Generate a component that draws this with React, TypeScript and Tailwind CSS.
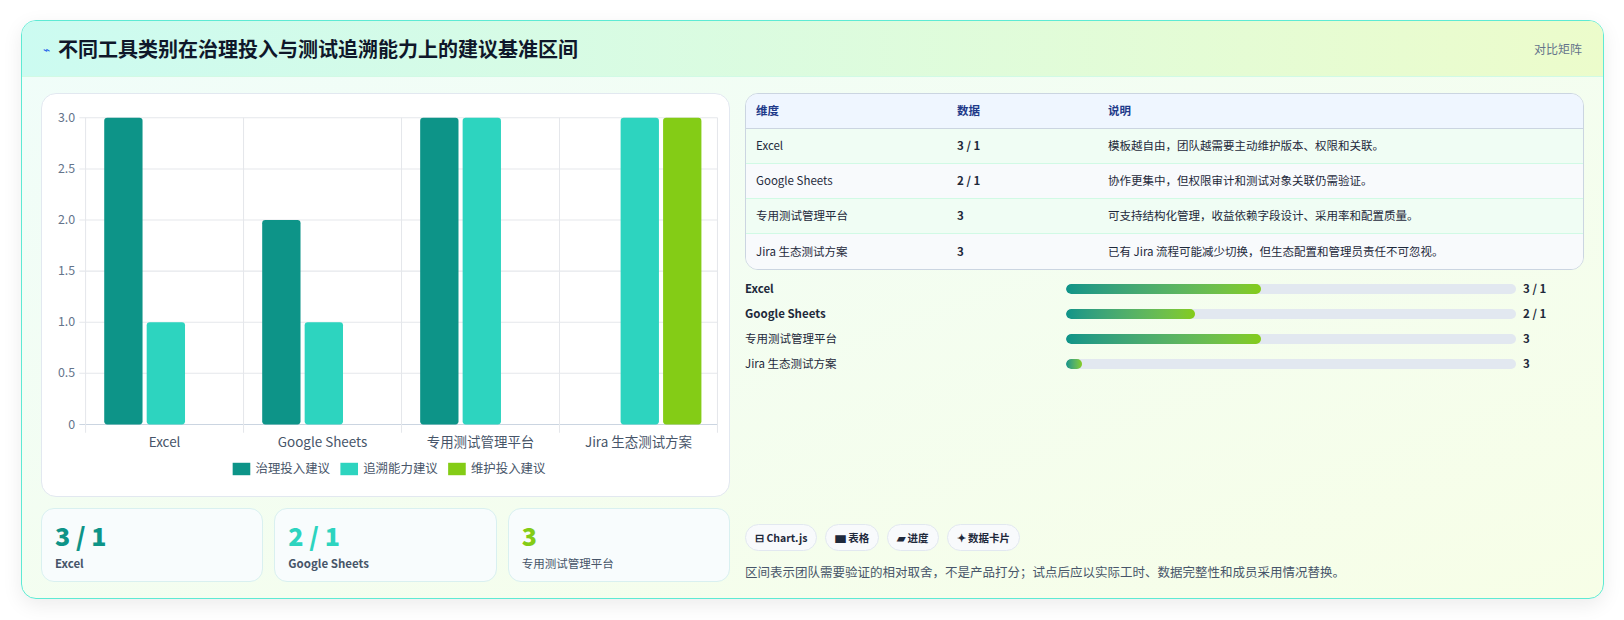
import React from "react";

const cats = ["Excel", "Google Sheets", "专用测试管理平台", "Jira 生态测试方案"];
const data = [
  [3, 1, 0],
  [2, 1, 0],
  [3, 3, 0],
  [0, 3, 3],
];
const colors = ["#0d9488", "#2dd4bf", "#84cc16"];

function Chart() {
  const L = 42, R = 652, T = 23, B = 319;
  const cw = (R - L) / 4;
  const y = (v: number) => B - (v / 3) * (B - T);
  return (
    <svg width="689" height="404" viewBox="0 0 665 390" className="block">
      {[0, 0.5, 1, 1.5, 2, 2.5, 3].map((v) => (
        <g key={v}>
          <line x1={L - 6} x2={R} y1={y(v)} y2={y(v)} stroke={v === 0 ? "#cbd5e1" : "#e5e7eb"} />
          <text x={L - 10} y={y(v) + 4} textAnchor="end" fontSize="12" fill="#64748b">{v === 0 ? "0" : v.toFixed(1)}</text>
        </g>
      ))}
      {[0, 1, 2, 3, 4].map((i) => (
        <line key={i} x1={L + i * cw} x2={L + i * cw} y1={T} y2={B + 8} stroke="#e5e7eb" />
      ))}
      {data.map((row, ci) =>
        row.map((v, si) =>
          v > 0 ? (
            <rect key={ci + "-" + si} x={L + ci * cw + 18 + si * 41} y={y(v)} width={37} height={B - y(v)} rx={3} fill={colors[si]} />
          ) : null
        )
      )}
      {cats.map((c, i) => (
        <text key={c} x={L + i * cw + cw / 2} y={341} textAnchor="middle" fontSize="13" fill="#475569">{c}</text>
      ))}
      {["治理投入建议", "追溯能力建议", "维护投入建议"].map((t, i) => {
        const x = 184 + i * 104;
        return (
          <g key={t}>
            <rect x={x} y={356} width={17} height={12} fill={colors[i]} />
            <text x={x + 22} y={366} fontSize="12" fill="#475569">{t}</text>
          </g>
        );
      })}
    </svg>
  );
}

const rows = [
  ["Excel", "3 / 1", "模板越自由，团队越需要主动维护版本、权限和关联。"],
  ["Google Sheets", "2 / 1", "协作更集中，但权限审计和测试对象关联仍需验证。"],
  ["专用测试管理平台", "3", "可支持结构化管理，收益依赖字段设计、采用率和配置质量。"],
  ["Jira 生态测试方案", "3", "已有 Jira 流程可能减少切换，但生态配置和管理员责任不可忽视。"],
];
const bars = [
  ["Excel", 43.3, "3 / 1", true],
  ["Google Sheets", 28.6, "2 / 1", true],
  ["专用测试管理平台", 43.3, "3", false],
  ["Jira 生态测试方案", 3.5, "3", false],
] as const;

export default function App() {
  return (
    <div className="w-[1624px] h-[620px] bg-white pt-[20px] pl-[21px]" style={{ fontFamily: '"Noto Sans CJK SC", "Noto Sans", sans-serif' }}>
      <div className="w-[1583px] h-[579px] rounded-[15px] border border-[#5eead4] overflow-hidden bg-gradient-to-br from-[#f0fdfa] to-[#f7fee7] shadow-[0_6px_20px_rgba(0,0,0,0.08)] flex flex-col">
        <div className="h-[56px] shrink-0 flex items-center justify-between px-[21px] bg-gradient-to-r from-[#ccfbf1] to-[#ecfccb] border-b border-[#d1fae5]">
          <div className="flex items-center gap-2">
            <span className="text-[12px] text-[#2563eb]">⌁</span>
            <span className="text-[20px] font-bold text-[#0f172a]">不同工具类别在治理投入与测试追溯能力上的建议基准区间</span>
          </div>
          <span className="text-[12px] text-[#64748b]">对比矩阵</span>
        </div>
        <div className="flex gap-[15px] px-[19px] pt-[16px] pb-[17px] flex-1">
          <div className="w-[689px] flex flex-col gap-[11px]">
            <div className="h-[404px] bg-white rounded-[15px] border border-[#e2e8f0] overflow-hidden">
              <Chart />
            </div>
            <div className="grid grid-cols-3 gap-[11px]">
              {[["3 / 1", "Excel", "#0d9488", true], ["2 / 1", "Google Sheets", "#2dd4bf", true], ["3", "专用测试管理平台", "#84cc16", false]].map(([v, l, c, b]) => (
                <div key={l as string} className="h-[74px] rounded-[13px] border border-[#d9f0f0] bg-[#f8fcfd] px-[13px] pt-[11px]">
                  <div className="text-[25px] font-extrabold leading-[31px]" style={{ color: c as string }}>{v}</div>
                  <div className={"text-[11.5px] text-[#475569] mt-[4px] " + (b ? "font-bold" : "")}>{l}</div>
                </div>
              ))}
            </div>
          </div>
          <div className="flex-1 flex flex-col">
            <div className="rounded-[13px] border border-[#cbd5e1] overflow-hidden bg-[#f8fafc]">
              <div className="grid grid-cols-[201px_151px_1fr] h-[35px] items-center bg-[#eff6ff] border-b border-[#cbd5e1] px-[10px] text-[11.5px] font-bold text-[#1e3a8a]">
                <span>维度</span><span>数据</span><span>说明</span>
              </div>
              {rows.map((r, i) => (
                <div key={r[0]} className={"grid grid-cols-[201px_151px_1fr] h-[35px] items-center px-[10px] text-[11.5px] text-[#1e293b] " + (i % 2 === 0 ? "bg-[#f0fdf4]" : "bg-[#f8fafc]") + (i < 3 ? " border-b border-[#d1fae5]" : "")}>
                  <span>{r[0]}</span><span className="font-semibold">{r[1]}</span><span>{r[2]}</span>
                </div>
              ))}
            </div>
            <div className="flex flex-col gap-[10px] mt-[11px]">
              {bars.map(([l, p, v, b]) => (
                <div key={l} className="flex items-center h-[15px] text-[11.5px] text-[#1e293b]">
                  <span className={"w-[321px] " + (b ? "font-bold" : "")}>{l}</span>
                  <div className="w-[450px] h-[10px] rounded-full bg-[#e2e8f0] overflow-hidden">
                    <div className="h-full rounded-full bg-gradient-to-r from-[#0d9488] to-[#84cc16]" style={{ width: p + "%" }} />
                  </div>
                  <span className="ml-[7px] font-bold">{v}</span>
                </div>
              ))}
            </div>
            <div className="mt-auto">
              <div className="flex gap-[8px]">
                {["⊟ Chart.js", "▆ 表格", "▰ 进度", "✦ 数据卡片"].map((t) => (
                  <span key={t} className="h-[27px] px-[9px] rounded-full border border-[#e2e8f0] bg-[#f8fafc] text-[10.5px] font-semibold text-[#1e293b] flex items-center">{t}</span>
                ))}
              </div>
              <div className="mt-[12px] text-[12.5px] text-[#475569]">区间表示团队需要验证的相对取舍，不是产品打分；试点后应以实际工时、数据完整性和成员采用情况替换。</div>
            </div>
          </div>
        </div>
      </div>
    </div>
  );
}
